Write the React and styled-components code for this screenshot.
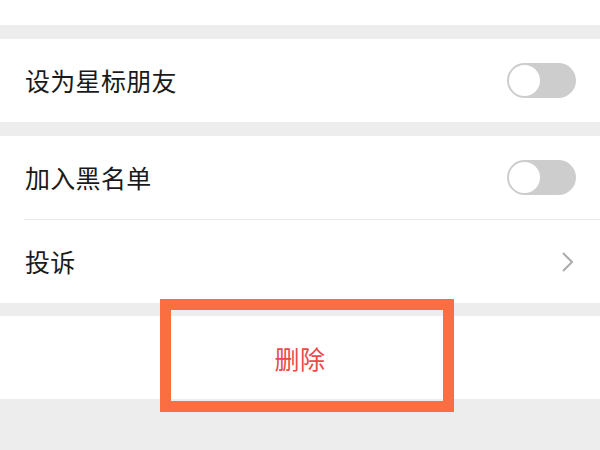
import React from "react";
import styled, { createGlobalStyle } from "styled-components";

const Global = createGlobalStyle`
  html, body { margin: 0; padding: 0; background: #ededed; }
  body { font-family: "Noto Sans CJK SC", "Noto Sans", sans-serif; }
  #root { position: relative; width: 600px; height: 450px; overflow: hidden; }
`;

const Page = styled.div`
  display: flex;
  flex-direction: column;
  width: 600px;
  height: 450px;
  background: #ededed;
`;

const Section = styled.div`
  background: #ffffff;
  display: flex;
  flex-direction: column;
  height: ${(p) => p.$h || "auto"};
  margin-bottom: ${(p) => p.$gap || "0px"};
`;

const Row = styled.div`
  height: 83px;
  display: flex;
  align-items: center;
  justify-content: space-between;
  padding: 0 24px 0 25px;
`;

const Label = styled.span`
  font-size: 25px;
  color: #1a1a1a;
  letter-spacing: 0.3px;
  line-height: 1;
`;

const Divider = styled.div`
  height: 1px;
  margin-left: 24px;
  background: #e8e8e8;
`;

const Track = styled.div`
  width: 69px;
  height: 35px;
  border-radius: 18px;
  background: #cdcdcd;
  display: flex;
  align-items: center;
  padding: 0 2px;
  box-sizing: border-box;
`;

const Knob = styled.div`
  width: 31px;
  height: 31px;
  border-radius: 50%;
  background: #ffffff;
`;

const DeleteRow = styled.div`
  height: 83px;
  display: flex;
  align-items: center;
  justify-content: center;
  font-size: 25px;
  color: #e9494a;
  letter-spacing: 0.5px;
`;

const Highlight = styled.div`
  position: absolute;
  left: 160px;
  top: 299px;
  width: 294px;
  height: 113px;
  border: 11px solid #fb6e41;
  box-sizing: border-box;
`;

const Toggle = () => (
  <Track>
    <Knob />
  </Track>
);

const Chevron = () => (
  <svg width="14" height="22" viewBox="0 0 14 22" style={{ marginRight: "2px" }}>
    <path d="M3 2 L12 11 L3 20" fill="none" stroke="#ababab" strokeWidth="2" />
  </svg>
);

export default function App() {
  return (
    <>
      <Global />
      <Page>
        <Section $h="25px" $gap="14px" />
        <Section $gap="14px">
          <Row>
            <Label>设为星标朋友</Label>
            <Toggle />
          </Row>
        </Section>
        <Section $gap="13px">
          <Row>
            <Label>加入黑名单</Label>
            <Toggle />
          </Row>
          <Divider />
          <Row>
            <Label>投诉</Label>
            <Chevron />
          </Row>
        </Section>
        <Section>
          <DeleteRow>删除</DeleteRow>
        </Section>
      </Page>
      <Highlight />
    </>
  );
}
